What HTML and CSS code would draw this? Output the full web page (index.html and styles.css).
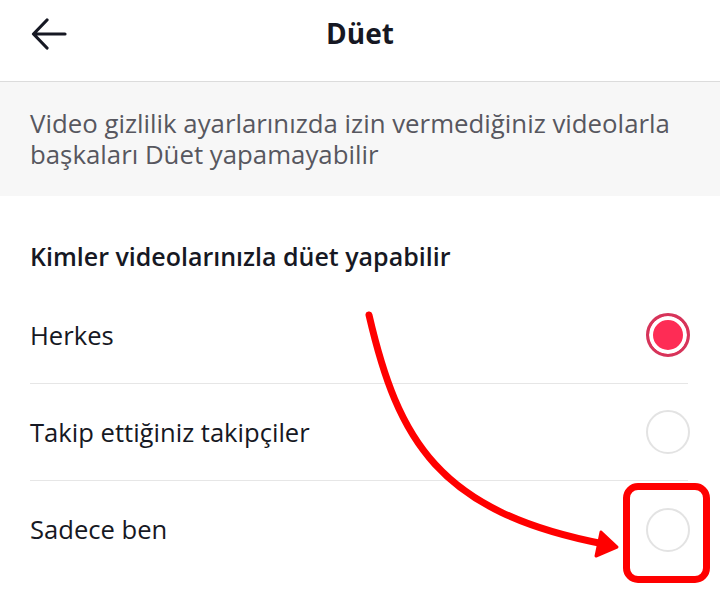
FILE: index.html
```html
<!DOCTYPE html>
<html lang="tr">
<head>
<meta charset="utf-8">
<link rel="stylesheet" href="styles.css">
</head>
<body>
<div class="page">
  <header class="header">
    <div class="back">
      <svg width="36" height="32" viewBox="0 0 36 32"><path d="M34 16H3M16 2L2.5 16L16 30" fill="none" stroke="#161823" stroke-width="3.2" stroke-linecap="round" stroke-linejoin="round"/></svg>
    </div>
    <h1 class="title">Düet</h1>
  </header>
  <div class="banner">Video gizlilik ayarlarınızda izin vermediğiniz videolarla başkaları Düet yapamayabilir</div>
  <div class="section">
    <div class="section-title">Kimler videolarınızla düet yapabilir</div>
    <div class="row"><span class="label">Herkes</span><span class="radio selected"></span></div>
    <div class="row"><span class="label">Takip ettiğiniz takipçiler</span><span class="radio"></span></div>
    <div class="row last"><span class="label">Sadece ben</span><span class="radio"></span></div>
  </div>
  <div class="highlight"></div>
  <svg class="arrow" width="720" height="608" viewBox="0 0 720 608">
    <path d="M369 315 C398 440 438 512 604 544" fill="none" stroke="#ff0000" stroke-width="7" stroke-linecap="round"/>
    <polygon points="601,532 617,547 596,556" fill="#ff0000" stroke="#ff0000" stroke-width="3" stroke-linejoin="round"/>
  </svg>
</div>
</body>
</html>
```
FILE: styles.css
```css
* { box-sizing: border-box; }
html, body { margin: 0; padding: 0; background: #fff; }
body { font-family: "Open Sans", "Liberation Sans", sans-serif; color: #161823; }
.page { position: relative; width: 720px; height: 608px; overflow: hidden; }
.header {
  height: 82px;
  border-bottom: 1px solid #dcdcdc;
  display: flex;
  align-items: center;
  justify-content: center;
  position: relative;
}
.back { position: absolute; left: 31px; top: 18px; }
.title { margin: 0 0 16px 0; font-size: 28px; font-weight: 700; color: #161823; }
.banner {
  background: #f7f7f7;
  padding: 26px 30px 25px 30px;
  font-size: 25.8px;
  line-height: 31px;
  color: #57575f;
  height: 114px;
}
.section { padding: 0 32px 0 30px; }
.section-title {
  font-size: 25px;
  font-weight: 600;
  padding-top: 45px;
  height: 91px;
  line-height: 30px;
}
.row {
  height: 97px;
  display: flex;
  align-items: center;
  justify-content: space-between;
  border-bottom: 1px solid #e6e6e6;
}
.row.last { border-bottom: none; }
.label { font-size: 25.6px; color: #161823; }
.radio {
  width: 44px; height: 44px; border-radius: 50%;
  border: 2px solid #e3e3e3;
  margin-right: -2px;
  flex: none;
}
.radio.selected {
  border: 3px solid #d6345a;
  background: #fe2c55;
  box-shadow: inset 0 0 0 4px #fff;
}
.highlight {
  position: absolute;
  left: 623px; top: 483px;
  width: 87px; height: 100px;
  border: 7px solid #ff0000;
  border-radius: 15px;
}
.arrow { position: absolute; left: 0; top: 0; }
```
